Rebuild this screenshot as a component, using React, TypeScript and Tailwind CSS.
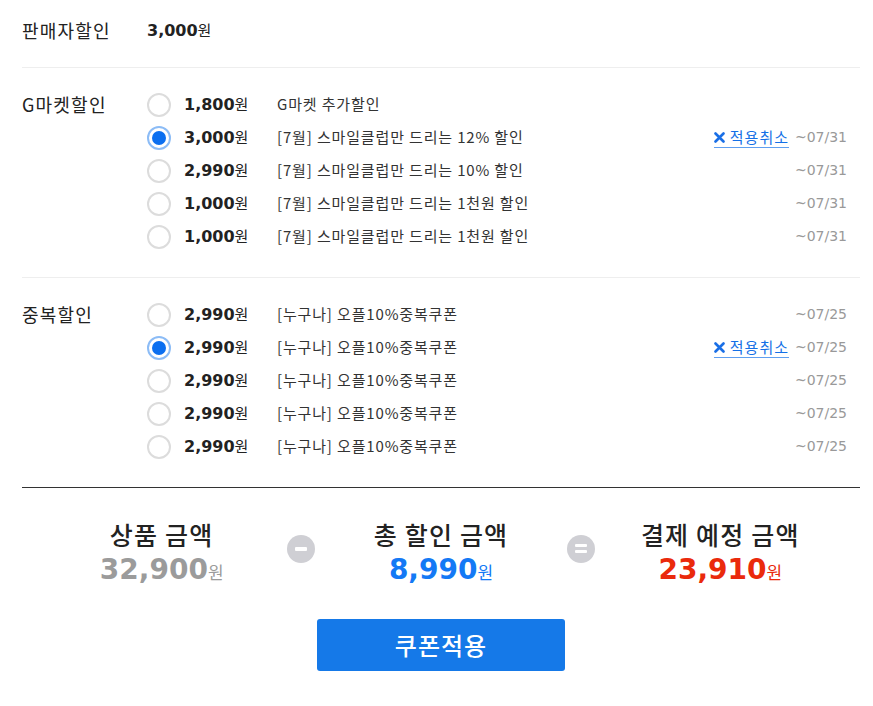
import React from "react";

const KR = "font-['Noto_Sans_CJK_KR','Noto_Sans',sans-serif]";
const NUM = "font-['DejaVu_Sans',sans-serif]";

type Coupon = {
  amount: string;
  desc: string;
  until: string;
  checked?: boolean;
};

const GMARKET: Coupon[] = [
  { amount: "1,800", desc: "G마켓 추가할인", until: "" },
  { amount: "3,000", desc: "[7월] 스마일클럽만 드리는 12% 할인", until: "~07/31", checked: true },
  { amount: "2,990", desc: "[7월] 스마일클럽만 드리는 10% 할인", until: "~07/31" },
  { amount: "1,000", desc: "[7월] 스마일클럽만 드리는 1천원 할인", until: "~07/31" },
  { amount: "1,000", desc: "[7월] 스마일클럽만 드리는 1천원 할인", until: "~07/31" },
];

const DUPLICATE: Coupon[] = [
  { amount: "2,990", desc: "[누구나] 오플10%중복쿠폰", until: "~07/25" },
  { amount: "2,990", desc: "[누구나] 오플10%중복쿠폰", until: "~07/25", checked: true },
  { amount: "2,990", desc: "[누구나] 오플10%중복쿠폰", until: "~07/25" },
  { amount: "2,990", desc: "[누구나] 오플10%중복쿠폰", until: "~07/25" },
  { amount: "2,990", desc: "[누구나] 오플10%중복쿠폰", until: "~07/25" },
];

function Radio({ checked }: { checked?: boolean }) {
  return checked ? (
    <span className="w-6 h-6 shrink-0 rounded-full border-2 border-[#8cbcf6] bg-white flex items-center justify-center">
      <span className="w-[14px] h-[14px] rounded-full bg-[#0b6ff0]" />
    </span>
  ) : (
    <span className="w-6 h-6 shrink-0 rounded-full border-2 border-[#dcdcdc] bg-white" />
  );
}

function CouponRow({ coupon }: { coupon: Coupon }) {
  return (
    <div className="flex items-center h-[33px]">
      <Radio checked={coupon.checked} />
      <div className="w-[93px] ml-[13px] flex items-baseline text-[#222]">
        <span className={`${NUM} font-bold text-[16px]`}>{coupon.amount}</span>
        <span className={`${KR} text-[15px]`}>원</span>
      </div>
      <div className={`${KR} flex-1 text-[15px] text-[#333] tracking-[0.85px]`}>{coupon.desc}</div>
      {coupon.checked && (
        <a className={`${KR} flex items-center gap-[5px] text-[15px] text-[#1470e6] border-b border-[#5f9ff0] leading-[20px] tracking-[1px]`}>
          <svg width="11" height="11" viewBox="0 0 11 11">
            <path d="M1.5 1.5 L9.5 9.5 M9.5 1.5 L1.5 9.5" stroke="#1a6fe6" strokeWidth="2.6" strokeLinecap="round" />
          </svg>
          적용취소
        </a>
      )}
      <span className={`${NUM} w-[58px] text-right text-[14px] text-[#999]`}>{coupon.until}</span>
    </div>
  );
}

function Section({ label, coupons, last }: { label: string; coupons: Coupon[]; last?: boolean }) {
  return (
    <div className={`flex pt-5 pb-6 border-b ${last ? "border-[#333]" : "border-[#eee]"}`}>
      <div className={`${KR} w-[125px] text-[18px] text-[#222] leading-[33px] tracking-[1.2px]`}>{label}</div>
      <div className="flex-1 pr-[13px]">
        {coupons.map((c, i) => (
          <CouponRow key={i} coupon={c} />
        ))}
      </div>
    </div>
  );
}

function Operator({ kind }: { kind: "minus" | "equal" }) {
  return (
    <div className="w-0 flex justify-center -mt-2">
      <span className="w-7 h-7 shrink-0 rounded-full bg-[#cfcfd4] flex flex-col items-center justify-center gap-[3px]">
        {kind === "minus" ? (
          <span className="w-[12px] h-[4px] rounded-[1px] bg-white" />
        ) : (
          <>
            <span className="w-[12px] h-[3px] rounded-[1px] bg-white" />
            <span className="w-[12px] h-[3px] rounded-[1px] bg-white" />
          </>
        )}
      </span>
    </div>
  );
}

function Total({ title, amount, color }: { title: string; amount: string; color: string }) {
  return (
    <div className="flex flex-col items-center">
      <div className={`${KR} text-[25px] font-medium text-[#222] leading-[32px] tracking-[1.2px]`}>{title}</div>
      <div className={`flex items-baseline mt-[3px] ${color}`}>
        <span className={`${NUM} font-bold text-[28px] leading-[34px]`}>{amount}</span>
        <span className={`${KR} text-[17px]`}>원</span>
      </div>
    </div>
  );
}

export default function App() {
  return (
    <div className="min-h-screen bg-white pl-[22px] pr-[13px]">
      <div className="flex pt-[18px] pb-6 border-b border-[#eee]">
        <div className={`${KR} w-[125px] text-[18px] text-[#222] leading-6 tracking-[1.2px]`}>판매자할인</div>
        <div className="flex items-baseline text-[#222] leading-6">
          <span className={`${NUM} font-bold text-[16px]`}>3,000</span>
          <span className={`${KR} text-[15px]`}>원</span>
        </div>
      </div>

      <Section label="G마켓할인" coupons={GMARKET} />
      <Section label="중복할인" coupons={DUPLICATE} last />

      <div className="grid grid-cols-[1fr_0px_1fr_0px_1fr] items-center pt-[30px]">
        <Total title="상품 금액" amount="32,900" color="text-[#9b9b9b]" />
        <Operator kind="minus" />
        <Total title="총 할인 금액" amount="8,990" color="text-[#1479f5]" />
        <Operator kind="equal" />
        <Total title="결제 예정 금액" amount="23,910" color="text-[#ea2a0c]" />
      </div>

      <div className="flex justify-center mt-8">
        <button className={`${KR} w-[248px] h-[52px] bg-[#1579e8] rounded-[3px] text-white text-[24px] font-medium tracking-[1px]`}>
          쿠폰적용
        </button>
      </div>
    </div>
  );
}
